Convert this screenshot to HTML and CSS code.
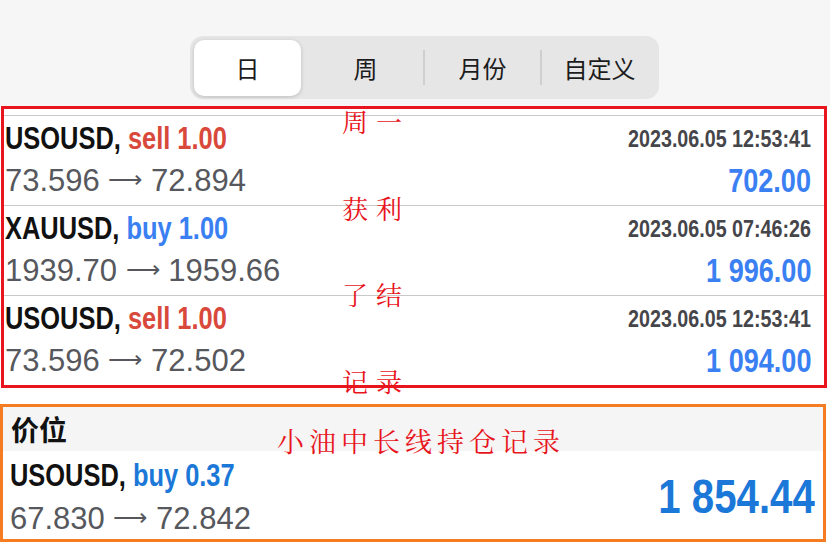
FILE: index.html
```html
<!DOCTYPE html>
<html lang="zh">
<head>
<meta charset="utf-8">
<title>历史</title>
<link rel="stylesheet" href="styles.css">
</head>
<body>
<div class="top">
  <div class="segmented">
    <div class="seg active">日</div>
    <div class="seg">周</div>
    <div class="seg divided">月份</div>
    <div class="seg divided">自定义</div>
  </div>
</div>

<div class="trades">
  <div class="row">
    <div class="line">
      <span class="title"><span class="sym">USOUSD,</span> <span class="sell">sell 1.00</span></span>
      <span class="date">2023.06.05 12:53:41</span>
    </div>
    <div class="line">
      <span class="prices">73.596 <span class="arrow">⟶</span> 72.894</span>
      <span class="profit">702.00</span>
    </div>
  </div>
  <div class="row">
    <div class="line">
      <span class="title"><span class="sym">XAUUSD,</span> <span class="buy">buy 1.00</span></span>
      <span class="date">2023.06.05 07:46:26</span>
    </div>
    <div class="line">
      <span class="prices">1939.70 <span class="arrow">⟶</span> 1959.66</span>
      <span class="profit">1 996.00</span>
    </div>
  </div>
  <div class="row">
    <div class="line">
      <span class="title"><span class="sym">USOUSD,</span> <span class="sell">sell 1.00</span></span>
      <span class="date">2023.06.05 12:53:41</span>
    </div>
    <div class="line">
      <span class="prices">73.596 <span class="arrow">⟶</span> 72.502</span>
      <span class="profit">1 094.00</span>
    </div>
  </div>
  <div class="note-col">
    <span class="note">周一</span>
    <span class="note">获利</span>
    <span class="note">了结</span>
    <span class="note">记录</span>
  </div>
</div>

<div class="positions">
  <div class="pos-head">价位</div>
  <div class="pos-row">
    <div class="pos-left">
      <div class="pos-title-line"><span class="pos-title"><span class="sym">USOUSD,</span> <span class="buy2">buy 0.37</span></span></div>
      <div class="pos-prices">67.830 <span class="arrow">⟶</span> 72.842</div>
    </div>
    <div class="pos-profit">1 854.44</div>
  </div>
  <div class="note-wide">小油中长线持仓记录</div>
</div>
</body>
</html>
```

FILE: styles.css
```css
html, body {
  margin: 0;
  padding: 0;
}
body {
  width: 830px;
  height: 546px;
  overflow: hidden;
  background: #ffffff;
  font-family: "Liberation Sans", Arial, sans-serif;
}

/* top segmented control */
.top {
  height: 106px;
  background: #f6f6f6;
  box-sizing: border-box;
  padding-top: 36px;
  display: flex;
  justify-content: center;
}
.segmented {
  margin-left: 19px;
  width: 469px;
  height: 63px;
  background: #e6e6e6;
  border-radius: 13px;
  display: grid;
  grid-template-columns: repeat(4, 117px);
  align-items: center;
}
.seg {
  position: relative;
  height: 100%;
  display: flex;
  align-items: center;
  justify-content: center;
  font-family: "Noto Sans CJK SC", sans-serif;
  font-size: 24px;
  color: #1c1c1c;
}
.seg.active {
  height: 56px;
  margin: 0 6px 0 4px;
  background: #ffffff;
  border-radius: 10px;
  box-shadow: 0 1px 4px rgba(0,0,0,0.18);
}
.seg.divided::before {
  content: "";
  position: absolute;
  left: -1px;
  top: 14px;
  bottom: 14px;
  width: 2px;
  background: #cfcfcf;
}

/* trades list */
.trades {
  position: relative;
  margin: 0 3px 0 1px;
  border: 3px solid #e8151f;
  padding-top: 6px;
}
.row {
  border-top: 1px solid #c9c9c9;
  padding: 2px 13px 3px 1px;
  height: 84px;
}
.row:last-of-type {
  border-bottom: 1px solid #c9c9c9;
  padding-bottom: 2px;
}
.line {
  height: 42px;
  display: flex;
  align-items: center;
  justify-content: space-between;
}
.title, .date, .profit, .pos-title, .pos-profit {
  display: inline-block;
  font-weight: bold;
  white-space: nowrap;
}
.title, .pos-title {
  font-size: 31px;
  transform: scaleX(0.82);
  transform-origin: left center;
}
.sym { color: #111111; }
.sell { color: #d8493b; }
.buy { color: #3a80f2; }
.date {
  font-size: 24px;
  color: #45454a;
  transform: scaleX(0.82);
  transform-origin: right center;
}
.prices {
  font-size: 31px;
  color: #56585d;
  white-space: nowrap;
}
.arrow {
  font-family: "DejaVu Sans", sans-serif;
  font-weight: 200;
  font-size: 24px;
  vertical-align: 3px;
}
.profit {
  font-size: 33px;
  color: #3a80f2;
  transform: scaleX(0.82);
  transform-origin: right center;
}

/* handwritten-style annotations */
.note-col {
  position: absolute;
  left: 338px;
  top: -3px;
  height: 290px;
  display: flex;
  flex-direction: column;
  justify-content: space-between;
}
.note, .note-wide {
  font-family: "Noto Serif CJK SC", "AR PL UKai CN", "Noto Sans CJK SC", serif;
  font-weight: 400;
  color: #e8141c;
  line-height: 30px;
}
.note {
  font-size: 26px;
  letter-spacing: 8px;
}

/* positions */
.positions {
  position: relative;
  margin: 16px 4px 0 0;
  border: 3px solid #f57c22;
  height: 132px;
}
.pos-head {
  height: 44px;
  background: #f5f5f5;
  padding-left: 8px;
  display: flex;
  align-items: center;
  font-family: "Noto Sans CJK SC", sans-serif;
  font-weight: bold;
  font-size: 28px;
  color: #111111;
}
.pos-row {
  display: flex;
  justify-content: space-between;
  align-items: center;
  padding: 2px 8px 0 7px;
  height: 86px;
}
.pos-title-line {
  height: 44px;
  display: flex;
  align-items: center;
}
.buy2 { color: #1b78d8; }
.pos-prices {
  font-size: 31px;
  line-height: 40px;
  color: #56585d;
  white-space: nowrap;
}
.pos-profit {
  font-size: 49px;
  color: #1b78d8;
  transform: scaleX(0.82);
  transform-origin: right center;
}
.note-wide {
  position: absolute;
  left: 274px;
  top: 18px;
  font-size: 27px;
  letter-spacing: 5px;
  line-height: 32px;
}
```
